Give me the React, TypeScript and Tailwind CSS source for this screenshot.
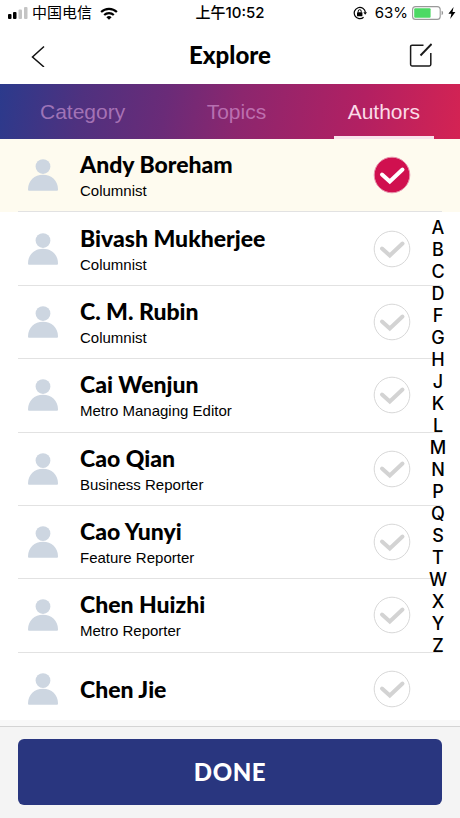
import React, { useState } from 'react';

interface Author {
  name: string;
  role?: string;
}

const tabs = ['Category', 'Topics', 'Authors'];

const authors: Author[] = [
  { name: 'Andy Boreham', role: 'Columnist' },
  { name: 'Bivash Mukherjee', role: 'Columnist' },
  { name: 'C. M. Rubin', role: 'Columnist' },
  { name: 'Cai Wenjun', role: 'Metro Managing Editor' },
  { name: 'Cao Qian', role: 'Business Reporter' },
  { name: 'Cao Yunyi', role: 'Feature Reporter' },
  { name: 'Chen Huizhi', role: 'Metro Reporter' },
  { name: 'Chen Jie' },
];

const letters = 'ABCDFGHJKLMNPQSTWXYZ'.split('');

const StatusBar = () => (
  <div className="relative flex h-[26px] items-center justify-between pl-2 pr-1 font-['Inter','Noto_Sans_CJK_SC',sans-serif] text-[15px] leading-6">
    <div className="flex items-center gap-1">
      <svg className="h-3 w-5" viewBox="0 0 20 12" aria-hidden="true">
        <rect x="0" y="7" width="3.5" height="5" rx="1" fill="#000" />
        <rect x="5" y="5" width="3.5" height="7" rx="1" fill="#000" />
        <rect x="10.5" y="2.5" width="3.5" height="9.5" rx="1" fill="#c4c4c4" />
        <rect x="16" y="0" width="3.5" height="12" rx="1" fill="#c4c4c4" />
      </svg>
      <span>中国电信</span>
      <svg className="ml-1 h-[13px] w-[18px]" viewBox="0 0 18 13" fill="none" stroke="#000" strokeWidth="2.1" aria-hidden="true">
        <path d="M1.1 5.1a11.2 11.2 0 0 1 15.8 0" />
        <path d="M4.2 8.1a6.8 6.8 0 0 1 9.6 0" />
        <path d="M6.4 10.2a3.7 3.7 0 0 1 5.2 0L9 12.8z" fill="#000" stroke="none" />
      </svg>
    </div>
    <span className="absolute inset-x-0 text-center font-medium">上午10:52</span>
    <div className="flex items-center">
      <svg className="mr-2 h-[14px] w-[14px]" viewBox="0 0 14 14" fill="none" stroke="#000" aria-hidden="true">
        <path d="M10.6 11.2A5.6 5.6 0 1 1 12.4 6.4" strokeWidth="1.2" />
        <path d="M10.4 6.2h3.6l-1.8 2.6z" fill="#000" stroke="none" />
        <rect x="4" y="6.2" width="5.4" height="4" rx=".5" fill="#000" stroke="none" />
        <path d="M5.2 6.4V5.2a1.5 1.5 0 0 1 3 0v1.2" />
      </svg>
      <span>63%</span>
      <svg className="ml-1 h-[14px] w-8" viewBox="0 0 32 14" aria-hidden="true">
        <rect x=".6" y=".6" width="27.6" height="12.8" rx="3" fill="#fff" stroke="#999" strokeWidth="1.1" />
        <rect x="2.2" y="2.2" width="16.4" height="9.6" rx="1" fill="#4cd964" />
        <path d="M29.6 4.8c2 .6 2 3.8 0 4.4z" fill="#999" />
      </svg>
      <svg className="ml-1 h-3 w-2" viewBox="0 0 8 12" aria-hidden="true">
        <path d="M5.6 0 .4 6.8h3L2.2 12l5.2-7H4.5z" fill="#000" />
      </svg>
    </div>
  </div>
);

const Header = () => (
  <header className="flex h-[58px] items-center justify-between px-7">
    <button type="button" aria-label="Back" className="flex w-6 items-center">
      <svg className="h-6 w-5" viewBox="0 0 20 24" fill="none" stroke="#111" strokeWidth="1.5" aria-hidden="true">
        <path d="M16 3.5 4.5 14 16 24" />
      </svg>
    </button>
    <h1 className="text-[24px] font-black leading-8">Explore</h1>
    <button type="button" aria-label="Edit" className="flex w-6 items-center justify-end">
      <svg className="h-6 w-6" viewBox="0 0 24 24" fill="none" stroke="#1a1a1a" strokeWidth="1.5" aria-hidden="true">
        <path d="M15.5 2.2H4A1.4 1.4 0 0 0 2.6 3.6v18A1.4 1.4 0 0 0 4 23h17.4a1.4 1.4 0 0 0 1.4-1.4V10" />
        <path d="M12.5 12.5 23.6 1" strokeWidth="1.9" />
      </svg>
    </button>
  </header>
);

const Avatar = () => (
  <svg className="h-8 w-[30px] shrink-0" viewBox="0 0 30 32" fill="#cdd6e1" aria-hidden="true">
    <circle cx="15" cy="7.6" r="7.4" />
    <path d="M0 30.5C0 21.5 6.5 15.7 15 15.7s15 5.8 15 14.8c0 .8-.5 1.3-1.3 1.3H1.3C.5 31.8 0 31.3 0 30.5z" />
  </svg>
);

interface AuthorRowProps {
  author: Author;
  checked: boolean;
  onToggle: () => void;
}

const AuthorRow = ({ author, checked, onToggle }: AuthorRowProps) => (
  <li className={`group flex px-[18px] ${checked ? 'bg-[#fefbef]' : 'bg-white'}`}>
    <label className="flex flex-1 cursor-pointer items-center border-b border-[#e2e2e2] pl-[10px] pr-[31px] group-last:border-transparent">
      <Avatar />
      <span className={`ml-[22px] flex flex-1 flex-col ${author.role ? 'pt-[3px]' : ''}`}>
        <span className="text-[23px] font-black leading-7">{author.name}</span>
        {author.role && (
          <span className="font-['Liberation_Sans',Arial,sans-serif] text-[15px] leading-[25px]">{author.role}</span>
        )}
      </span>
      <input type="checkbox" checked={checked} onChange={onToggle} className="sr-only" />
      <svg className="h-[38px] w-[38px] shrink-0" viewBox="0 0 38 38" fill="none" aria-hidden="true">
        <circle
          cx="19"
          cy="19"
          r="17.8"
          fill={checked ? '#d0104f' : '#fff'}
          stroke={checked ? '#e795ae' : '#d8d8d8'}
        />
        <path
          d="M9 18.5 16.8 25.5 29.5 13.5"
          stroke={checked ? '#fff' : '#d3d3d3'}
          strokeWidth="4"
          strokeLinecap="round"
        />
      </svg>
    </label>
  </li>
);

const App = () => {
  const [activeTab, setActiveTab] = useState('Authors');
  const [selected, setSelected] = useState<string[]>(['Andy Boreham']);

  const toggle = (name: string) => {
    setSelected((prev) => (prev.includes(name) ? prev.filter((n) => n !== name) : [...prev, name]));
  };

  return (
    <div className="flex min-h-screen flex-col bg-white font-['Lato',sans-serif] text-black">
      <StatusBar />
      <Header />

      <nav className="flex h-[55px] justify-between bg-[linear-gradient(100deg,#2b3a8c,#4f317f_18%,#6a2b78_36%,#8c266e_52%,#b22062_78%,#d42353)] px-[26px] font-['Liberation_Sans',Arial,sans-serif] text-[21px]">
        {tabs.map((tab) => (
          <button
            key={tab}
            type="button"
            onClick={() => setActiveTab(tab)}
            className={`border-b-[3px] px-[14px] pt-[3px] ${
              tab === activeTab ? 'border-[#f9e3ec] text-[#fbdbe8]' : 'border-transparent text-[#dca0dc]/60'
            }`}
          >
            {tab}
          </button>
        ))}
      </nav>

      <main className="relative flex flex-1 flex-col">
        <ul className="grid flex-1 auto-rows-fr">
          {authors.map((author) => (
            <AuthorRow
              key={author.name}
              author={author}
              checked={selected.includes(author.name)}
              onToggle={() => toggle(author.name)}
            />
          ))}
        </ul>

        <div className="absolute inset-x-0 bottom-0 h-[6px] bg-[#f8f8f8]" />

        {/* Alphabet index */}
        <nav
          aria-label="Index"
          className="absolute right-3 top-[78px] flex w-5 flex-col text-center font-['Inter',sans-serif] text-[18px] font-medium leading-[22px]"
        >
          {letters.map((letter) => (
            <a key={letter} href={`#${letter}`}>
              {letter}
            </a>
          ))}
        </nav>
      </main>

      <footer className="border-t border-[#d4d4d4] bg-[#f4f4f4] px-[18px] pb-[13px] pt-3">
        <button
          type="button"
          className="h-[66px] w-full rounded-md bg-[#29367f] text-[24px] font-black tracking-wide text-white"
        >
          DONE
        </button>
      </footer>
    </div>
  );
};

export default App;
